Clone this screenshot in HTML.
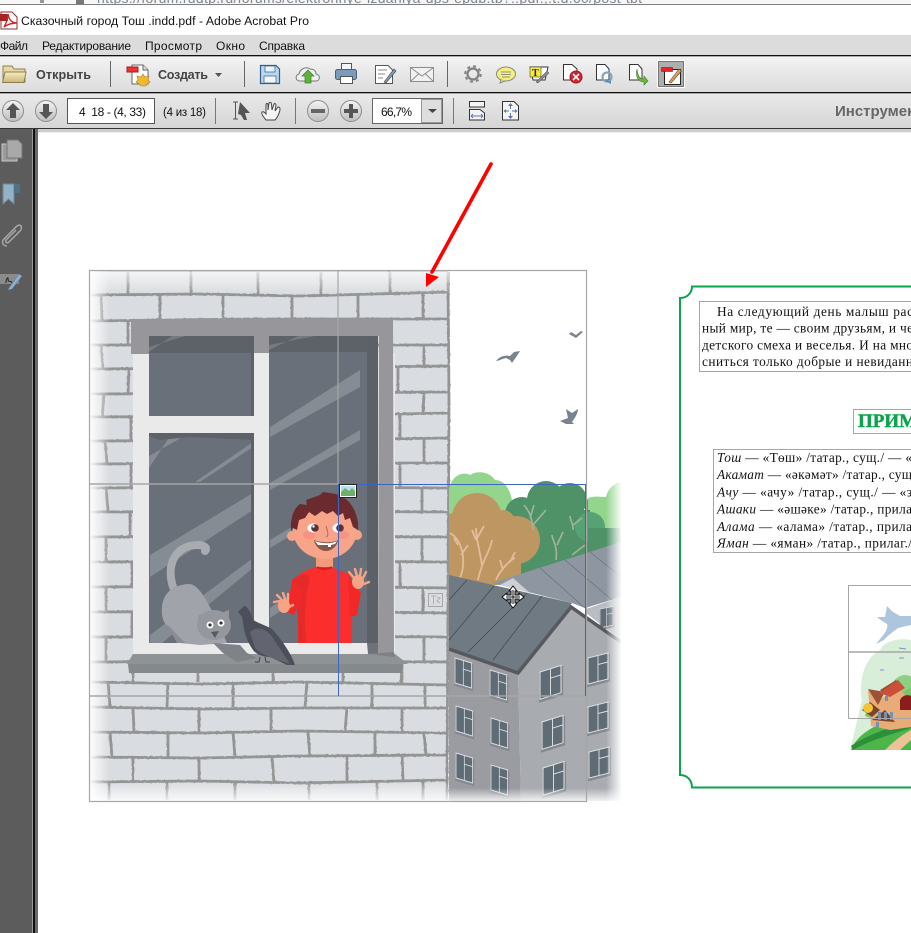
<!DOCTYPE html>
<html><head><meta charset="utf-8"><title>Сказочный город Тош</title>
<style>html,body{margin:0;padding:0;background:#fff;overflow:hidden}svg{display:block}text{font-family:"Liberation Sans",sans-serif}.s{font-family:"Liberation Serif",serif;font-size:13.33px;fill:#111}</style></head><body>
<svg xmlns="http://www.w3.org/2000/svg" width="911" height="933" viewBox="0 0 911 933">
<defs>
<linearGradient id="t1" x1="0" y1="0" x2="0" y2="1"><stop offset="0" stop-color="#f3f3f3"/><stop offset="1" stop-color="#dcdcdc"/></linearGradient>
<linearGradient id="t2" x1="0" y1="0" x2="0" y2="1"><stop offset="0" stop-color="#e9e9e9"/><stop offset="1" stop-color="#d6d6d6"/></linearGradient>
<linearGradient id="fl" x1="0" y1="0" x2="1" y2="0"><stop offset="0" stop-color="#fff" stop-opacity=".95"/><stop offset="1" stop-color="#fff" stop-opacity="0"/></linearGradient>
<linearGradient id="fr" x1="0" y1="0" x2="1" y2="0"><stop offset="0" stop-color="#fff" stop-opacity="0"/><stop offset="1" stop-color="#fff"/></linearGradient>
<linearGradient id="ft" x1="0" y1="0" x2="0" y2="1"><stop offset="0" stop-color="#fff" stop-opacity=".7"/><stop offset="1" stop-color="#fff" stop-opacity="0"/></linearGradient>
<linearGradient id="fb" x1="0" y1="0" x2="0" y2="1"><stop offset="0" stop-color="#fff" stop-opacity="0"/><stop offset="1" stop-color="#fff" stop-opacity=".9"/></linearGradient>
<linearGradient id="btn" x1="0" y1="0" x2="0" y2="1"><stop offset="0" stop-color="#f4f4f4"/><stop offset="1" stop-color="#bdbdbd"/></linearGradient>
<linearGradient id="fold" x1="0" y1="0" x2="0" y2="1"><stop offset="0" stop-color="#f6eec6"/><stop offset="1" stop-color="#cdb676"/></linearGradient>
<filter id="rough" x="-2%" y="-2%" width="104%" height="104%" color-interpolation-filters="sRGB"><feTurbulence type="fractalNoise" baseFrequency=".3" numOctaves="2" seed="4"/><feDisplacementMap in="SourceGraphic" scale="1.6"/></filter>
<clipPath id="sc"><rect x="449" y="465" width="172" height="340"/></clipPath>
<g id="w"><path d="M-1 1H22V29H-1Z" fill="#85888e"/><path d="M0 0H20V26H0Z" fill="#5f6b75" stroke="#dfe2e5" stroke-width="1"/><path d="M10 0V26M10 9H20" stroke="#dfe2e5" stroke-width=".9" fill="none"/></g>
</defs>

<!-- Chrome -->
<rect width="911" height="933" fill="#fff"/>
<rect width="911" height="5" fill="#f6f6f6"/>
<text x="97" y="3" font-size="14" fill="#7d8791" textLength="545">https://forum.rudtp.ru/forums/elektronnye-izdaniya-dps-epub.tb?..pdf.;.t.d.60/post-tbt</text>
<rect x="76" y="0" width="8" height="4" fill="#777"/><rect x="40" y="0" width="4" height="3" fill="#999"/>
<rect y="4" width="911" height="1" fill="#808080"/>
<rect y="5" width="911" height="30" fill="#fff"/>
<!-- pdf icon -->
<path d="M1 12H12L17 17V29H1Z" fill="#fff" stroke="#8b2f2f" stroke-width="1"/><path d="M0 14H8V21H0Z" fill="#a52424"/><path d="M4 27C7 22 8 17 8 14C9 19 11 23 17 23C12 23 8 24 4 27Z" fill="none" stroke="#d3252c" stroke-width="1.4"/>
<text x="21" y="25" font-size="12.2" fill="#111" textLength="288">Сказочный город Тош .indd.pdf - Adobe Acrobat Pro</text>
<rect y="35" width="911" height="20" fill="#dcdcdc"/>
<g font-size="12" fill="#111">
<text x="0" y="50" textLength="28">Файл</text><text x="42" y="50" textLength="89">Редактирование</text><text x="145" y="50" textLength="57">Просмотр</text><text x="216" y="50" textLength="29">Окно</text><text x="259" y="50" textLength="46">Справка</text>
</g>
<rect y="55" width="911" height="1.4" fill="#111"/>
<rect y="56.4" width="911" height="35.6" fill="url(#t1)"/>
<rect y="92" width="911" height="1.4" fill="#111"/>
<rect y="93.4" width="911" height="34.6" fill="url(#t2)"/>
<rect y="128" width="911" height="1.2" fill="#333"/>
<!-- toolbar 1 -->
<path d="M3 66H12L14 69H25V82H3Z" fill="#e6d9a3" stroke="#8f7f4f"/><path d="M2.500 82.500L5 72H26L24 82.500Z" fill="url(#fold)" stroke="#8f7f4f"/>
<text x="36" y="79" font-size="12.6" font-weight="bold" fill="#444" textLength="55">Открыть</text>
<g fill="#666"><rect x="110" y="61" width="1" height="26"/><rect x="244" y="61" width="1" height="26"/><rect x="447" y="61" width="1" height="26"/></g>
<path d="M132 65H143L148 70V84H132Z" fill="#fff" stroke="#666"/><path d="M143 65V70H148" fill="#ddd" stroke="#666"/><rect x="127" y="67" width="11" height="5" fill="#e33" stroke="#922"/><path d="M143 74L145 77L149 76L148 80L150 82L147 84L146 86H141L139 84L136 82L138 80L137 76L141 77Z" fill="#efb92f" stroke="#a97f20" stroke-width=".6"/>
<text x="158" y="79" font-size="12.6" font-weight="bold" fill="#444" textLength="50">Создать</text>
<path d="M215 73H222L218.500 77Z" fill="#555"/>
<!-- save -->
<path d="M260.500 65.500H276L279.500 69V83.500H260.500Z" fill="#b9d6ee" stroke="#2e5f8d" stroke-width="1.2"/><rect x="265" y="66" width="10" height="6" fill="#eaf3fa" stroke="#2e5f8d" stroke-width=".7"/><rect x="264" y="76" width="12" height="7" fill="#f4f4f4" stroke="#2e5f8d" stroke-width=".7"/>
<!-- cloud -->
<path d="M300 81C295 81 295 75 299 74C300 69 306 66 310 69C315 69 316 72 316 74C321 75 320 81 316 81Z" fill="#f0f0f0" stroke="#777"/><path d="M308 70L314 76H311V83H305V76H302Z" fill="#5fb13c" stroke="#3e7f27" stroke-width=".7"/>
<!-- print -->
<rect x="341.500" y="63.500" width="10" height="7" fill="#f5f5f5" stroke="#555"/><rect x="335.500" y="69.500" width="21" height="10" rx="2" fill="#7a9bbb" stroke="#4a6278"/><rect x="340.500" y="76.500" width="12" height="7" fill="#fff" stroke="#555"/>
<!-- edit -->
<path d="M375.500 65.500H388L392.500 70V83.500H375.500Z" fill="#fff" stroke="#555"/><path d="M378 70H387M378 74H385M378 78H383" stroke="#888"/><path d="M384 82L394 69L396 71L386 83Z" fill="#7d9dbd" stroke="#444" stroke-width=".6"/>
<!-- mail -->
<rect x="410.500" y="67.500" width="23" height="14" fill="#f1f1f1" stroke="#8d8d8d"/><path d="M410.500 67.500L422 76L433.500 67.500M410.500 81.500L419 73.500M433.500 81.500L425 73.500" fill="none" stroke="#8d8d8d"/>
<!-- gear -->
<circle cx="473" cy="74" r="5.500" fill="none" stroke="#808080" stroke-width="2.200"/><circle cx="473" cy="74" r="7.800" fill="none" stroke="#858585" stroke-width="2" stroke-dasharray="3 3.100"/>
<!-- comment -->
<ellipse cx="506" cy="74" rx="9.500" ry="7" fill="#f4ee7c" stroke="#888"/><path d="M501 80L500 83L505 81" fill="#f4ee7c" stroke="#888"/><path d="M501 72H511M501 74.500H511M502 77H510" stroke="#777" stroke-width=".8"/>
<!-- T note -->
<path d="M530 67H548L545 80H533Z" fill="#fff" stroke="#333"/><rect x="530" y="67" width="11" height="10" fill="#f4ec32" stroke="#444" stroke-width=".6"/><text x="532" y="76" font-size="10" font-weight="bold" fill="#222" style="font-family:'Liberation Serif',serif">T</text><path d="M536 82L547 71L549 73L538 83Z" fill="#889" stroke="#444" stroke-width=".5"/>
<!-- doc x -->
<path d="M563.500 64.500H572L577 69V80H563.500Z" fill="#fff" stroke="#333"/><circle cx="576" cy="77" r="6" fill="#d5232f" stroke="#9a1a22"/><path d="M573 74L579 80M579 74L573 80" stroke="#fff" stroke-width="1.600"/>
<!-- doc refresh -->
<path d="M596.500 64.500H605L609 69V80H596.500Z" fill="#fff" stroke="#333"/><circle cx="607" cy="77" r="4.500" fill="none" stroke="#7fa6c4" stroke-width="2.200"/><path d="M605 81H611V84Z" fill="#5f8fb5"/>
<!-- doc arrow -->
<path d="M629.500 64.500H638L642 69V80H629.500Z" fill="#fff" stroke="#333"/><path d="M637 69C638 78 641 79 644 79V76L648 81L644 85V82C639 82 635 78 637 69Z" fill="#6fb544" stroke="#3f7d29" stroke-width=".6"/>
<!-- active -->
<rect x="657.500" y="60.500" width="27" height="27" fill="#aeaeae" stroke="#fff"/><rect x="658.500" y="61.500" width="25" height="25" fill="none" stroke="#777"/>
<path d="M664.500 69.500H680.500V84.500H664.500Z" fill="#fff" stroke="#222"/><rect x="661.500" y="67.500" width="11" height="4" fill="#e3242b" stroke="#8f1b1f" stroke-width=".6"/><path d="M669 82L679 69L681.500 71L671 83Z" fill="#e8a34a" stroke="#444" stroke-width=".6"/>
<!-- toolbar 2 -->
<g stroke="#8c8c8c" fill="url(#btn)"><circle cx="13" cy="111" r="10.500"/><circle cx="46" cy="111" r="10.500"/><circle cx="318" cy="111" r="10.500"/><circle cx="351" cy="111" r="10.500"/></g>
<path d="M13 103L20 110H16V118H10V110H6Z" fill="#555"/><path d="M46 119L53 112H49V104H43V112H39Z" fill="#555"/>
<rect x="311" y="109" width="14" height="4" fill="#666"/><path d="M349 104H353V109H358V113H353V118H349V113H344V109H349Z" fill="#555"/>
<rect x="67.500" y="98.500" width="87" height="25" fill="#fff" stroke="#555"/>
<text x="79" y="116" font-size="12" fill="#111" textLength="67" xml:space="preserve">4  18 - (4, 33)</text>
<text x="163" y="116" font-size="11.500" fill="#111" textLength="43">(4 из 18)</text>
<g fill="#777"><rect x="215" y="98" width="1" height="26"/><rect x="295" y="98" width="1" height="26"/><rect x="453" y="98" width="1" height="26"/></g>
<path d="M233 102H238M233 119H238M235.500 102V119" stroke="#555" fill="none"/><path d="M240 102L250 113H245L247 120L244 120L241 115L238 114Z" fill="#555"/>
<path d="M266 120C263 116 261 114 262 112C264 111 265 113 266 114L266 105C266 103 268 103 268 105V110L269 103C270 102 271 102 271.500 104L272 110L274 104C275 103 276 104 276 105L275 111L278 107C280 107 280 108 280 110C279 114 278 117 275 120Z" fill="#f5f5f5" stroke="#444"/>
<rect x="372.500" y="98.500" width="70" height="25" fill="#fff" stroke="#666"/><rect x="421.500" y="99.500" width="20" height="23" fill="#dedede" stroke="#999"/>
<path d="M428 109H437L432.500 113Z" fill="#444"/>
<text x="381" y="116" font-size="12" fill="#111" textLength="31">66,7%</text>
<path d="M469.500 101.500H484.500V107H469.500ZM469.500 109.500H480L484.500 113V120H469.500Z" fill="#f5f5f5" stroke="#333"/><path d="M471 116H483M471 116L473 114M471 116L473 118M483 116L481 114M483 116L481 118" stroke="#6075b0" fill="none"/>
<path d="M502.500 101.500H514L518.500 106V120H502.500Z" fill="#f5f5f5" stroke="#333"/><path d="M510.500 104V109M510.500 113V118M505 111H509M512 111H516" stroke="#6075b0" fill="none"/><path d="M508 106L510.500 103L513 106ZM508 116L510.500 119L513 116ZM506 109L503.500 111L506 113ZM515 109L517.500 111L515 113Z" fill="#6075b0"/>
<text x="835" y="116" font-size="15" font-weight="bold" fill="#666">Инструмен</text>

<!-- left panel -->
<rect y="129" width="32" height="804" fill="#5c5c5c"/><rect x="32" y="129" width="1" height="804" fill="#9a9a9a"/><rect x="33" y="129" width="2" height="804" fill="#111"/><rect x="35" y="129" width="3" height="804" fill="#6a6a6a"/>
<rect x="38" y="129" width="873" height="3" fill="#cfcfcf"/><rect x="38" y="132" width="873" height="1" fill="#eee"/>
<rect x="2" y="144" width="15" height="17" fill="#9b9b9b" stroke="#c8c8c8"/><path d="M7 140H18L22 144V158H7Z" fill="#a9a9a9" stroke="#777"/>
<path d="M3 184H14V204L8.500 199L3 204Z" fill="#93b2c8" stroke="#6e8799"/><rect x="14" y="184" width="6" height="9" fill="#4f7289"/>
<path d="M7 246C3 246 1 242 4 239L17 226C21 223 23 228 20 231L9 242C7 244 5 242 6 240L16 230" fill="none" stroke="#a8a8a8" stroke-width="1.500"/>
<rect x="0" y="274" width="19" height="10" fill="#8b8b8b"/><path d="M6 283C6 278 9 276 8 280C9 283 11 280 12 283" fill="none" stroke="#222"/><path d="M9 288L19 274L22 276L12 289L8 290Z" fill="#8fb0cd" stroke="#5f7e98" stroke-width=".6"/>

<!-- wall -->
<rect x="90" y="271" width="358.500" height="530" fill="#d9dce0"/>
<g filter="url(#rough)" fill="none" stroke="#949495" stroke-width="2.800">
<path d="M90 295L200 294L300 296L448 292M90 321L250 319L448 319M90 345H448M90 369L250 368L448 366M90 394L300 393L448 392M90 417L300 416L448 413M90 441L300 440L448 438M90 464L300 463L448 463M90 488L300 487L448 488M90 512L300 511L448 512M90 537L300 536L448 537M90 562L300 561L448 562M90 587L300 586L448 588M90 612L300 611L448 613M90 637L300 636L448 637M90 662L300 661L448 662M90 682L200 684L300 682L448 685M90 707L200 709L300 708L448 708M90 732L200 733L300 731L448 733M90 757L200 758L300 756L448 755M90 782L200 781L300 783L448 780"/>
<path d="M128 272V295M191 272V295M258 272V295M321 272V295M390 272V293M101 295L102 321M160 295V321M223 295V321M292 295V321M358 295V320M423 293V319M128 321V345M101 345L103 369M129 369L128 394M104 394L102 417M131 417V441M105 441L107 464M131 464V488M106 488L108 512M130 512V537M106 537V562M132 562V587M106 587V612M132 612V637M106 637V662M133 664V682M198 664V682M273 664V682M343 664V682M402 664V683M108 682L110 707M168 682L167 707M233 682V707M307 682L305 707M372 682V707M425 685V708M133 707L134 732M199 707V732M271 707V732M347 707L345 732M402 708V733M110 732L112 757M168 732V757M233 732L235 757M308 732L310 757M375 732V757M424 733L426 755M133 757V782M199 757V782M272 757L274 782M347 757V782M402 755L403 780M109 782V800M167 782V800M235 782V800M309 782V800M377 782V800M423 780V800M424 345V366M398 366V392M424 392L423 413M400 413V438M424 438V463M400 463V488M422 488V512M422 537V562M400 562V588M423 588V613M424 637V662M402 662L401 685"/>
<path d="M448 272L449 400L447 800" stroke-width="2.800"/>
</g>

<!-- window -->
<rect x="133" y="353" width="262" height="302" fill="#eaeaea"/>
<path d="M131 319H393L394 654H378L379 336H149V354H131Z" fill="#97979b"/>
<rect x="149" y="336" width="105" height="80" fill="#6a7079"/><rect x="149" y="433" width="105" height="210" fill="#6a7079"/><rect x="269" y="336" width="98" height="307" fill="#6a7079"/>
<g fill="#868c93">
<path d="M149 468V456L190 433H172ZM195 482L253 442V447L200 482Z"/>
<path d="M150 555L253 493V510L150 577ZM150 635L253 558V568L162 643H150ZM270 427L360 370V387L270 437ZM270 483L360 430V440L270 490ZM270 540L300 522V530L270 548ZM270 608L300 588V598L270 618Z"/>
</g>
<path d="M149 336H254V353H149ZM269 336H367V352H269ZM251 353H254V416H251ZM251 433H254V643H251ZM149 433L254 433V440L190 437L160 440L149 436Z" fill="#5d6168"/>
<rect x="367" y="336" width="11" height="307" fill="#5c6168"/>
<rect x="254" y="336" width="15" height="17" fill="#97979b"/>
<path d="M149 352L172 336H185L149 347Z" fill="#767a80"/><path d="M269 350L298 336H315L269 345Z" fill="#767a80"/>
<path d="M367 643H378V654L368 654Z" fill="#6f7379"/>
<path d="M133 654H395L408 664H127Z" fill="#8e9396"/>
<path d="M128 664H403L402 673H129Z" fill="#85898c"/>
<path d="M368 654L395 657L394 652Z" fill="#7f8085"/>

<!-- boy -->
<rect x="316" y="553" width="17" height="17" fill="#f29a7c"/>
<circle cx="292" cy="536" r="5" fill="#f5a487"/><circle cx="357" cy="535" r="5" fill="#f5a487"/>
<ellipse cx="325" cy="530" rx="32" ry="29" fill="#f7a488"/>
<path d="M291 531C290 518 294 508 300 504L307 505L306 500L320 495L323 492L336 494L346 499C354 506 359 518 358 530L353 527L350 518L345 520L343 513L338 516L333 511L327 514L322 511L315 516L309 512L305 518L299 520L297 530L293 528Z" fill="#6b2a2d"/>
<ellipse cx="309" cy="535" rx="6" ry="4" fill="#f48f84" opacity=".8"/><ellipse cx="343" cy="535" rx="6" ry="4" fill="#f48f84" opacity=".8"/>
<ellipse cx="313" cy="528" rx="5.500" ry="4.500" fill="#fff"/><ellipse cx="338" cy="528" rx="5.500" ry="4.500" fill="#fff"/><circle cx="315" cy="528" r="3.800" fill="#5a3236"/><circle cx="340" cy="528" r="3.800" fill="#5a3236"/><circle cx="313.500" cy="526.500" r="1.200" fill="#fff"/>
<path d="M326 526C328 532 329 536 326 537" fill="none" stroke="#b66" />
<path d="M314 540C322 543 332 543 338 540C337 547 331 551 326 551C320 551 315 546 314 540Z" fill="#84584c"/><path d="M315 541C322 544 332 544 337 541L335 544L331 545V547L328 547V545L318 545Z" fill="#fff"/>
<path d="M292 580C302 572 310 568 317 567L332 567C338 570 345 572 350 575C353 600 352 625 352 643H298C299 625 297 600 292 580Z" fill="#fb2d2d"/>
<path d="M292 580C300 575 306 572 310 578C305 595 304 620 306 643H298C299 625 297 600 292 580Z" fill="#e52a2a"/>
<path d="M292 580L287 612L294 615L303 594ZM348 575L361 593L357 615L350 617L349 595Z" fill="#f22828"/>
<path d="M317 567Q325 571 332 567" stroke="#cf2222" stroke-width="2" fill="none"/>
<ellipse cx="284" cy="606" rx="6" ry="7" fill="#f6a386"/><ellipse cx="358" cy="582" rx="6" ry="7" fill="#f6a386"/>
<g stroke="#f6a386" stroke-width="2.400" stroke-linecap="round" fill="none"><path d="M280 601L274 602M281 599L277 595M285 599L283 593M288 601L288 594M289 607L293 605M354 578L349 572M357 576L355 569M360 576L361 569M363 578L366 572M364 584L369 582"/></g>

<!-- cat -->
<path d="M173 587C166 565 175 545 198 545C204 545 208 548 205 551" fill="none" stroke="#a8abb0" stroke-width="8" stroke-linecap="round"/>
<path d="M162 607C163 592 175 584 190 584C200 586 206 600 217 620L227 643L200 645L180 643C176 632 172 630 170 627C164 625 161 618 162 607Z" fill="#a0a3a9"/>
<path d="M168 625C175 632 181 640 186 643H177L170 630Z" fill="#8b8d94"/>
<path d="M213 643L240 645L247 653L257 658L237 662L223 653Z" fill="#7f8388"/>
<ellipse cx="214" cy="625" rx="17" ry="15" fill="#94979e"/><path d="M198 615L198 623L207 613ZM229 610L221 613L229 622Z" fill="#94979e"/>
<circle cx="210" cy="625" r="3.500" fill="#fff"/><circle cx="221" cy="623" r="3.500" fill="#fff"/><circle cx="210" cy="625" r="1.600" fill="#333"/><circle cx="221" cy="623" r="1.600" fill="#333"/><path d="M211 632L219 631L215 638Z" fill="#5a5a60"/>
<!-- pigeon -->
<path d="M238 612L244 606C249 607 251 614 253 620C262 625 270 627 273 630C282 640 292 655 295 665L287 665L270 657C262 657 256 654 253 650C249 644 246 638 245 633C243 626 243 620 242 617Z" fill="#4c4f59"/>
<path d="M250 632C258 625 268 630 273 638C278 646 285 656 290 664C278 660 262 656 255 648Z" fill="#62656f"/>
<path d="M260 657L259 662L255 662M265 657L266 662L270 662" stroke="#444" fill="none"/>

<!-- trees and houses -->
<g clip-path="url(#sc)">
<path d="M449 490C452 473 465 472 470 475C478 470 490 472 495 480C505 480 510 490 512 500V580H449Z" fill="#93d58c"/>
<path d="M586 500C590 495 600 497 606 497C608 488 615 483 621 482V545H586Z" fill="#93d58c"/>
<g fill="#4f9268"><circle cx="546" cy="500" r="19"/><circle cx="522" cy="514" r="17"/><circle cx="570" cy="500" r="17"/><rect x="505" y="510" width="85" height="70"/><rect x="586" y="500" width="2" height="30"/></g>
<circle cx="590" cy="527" r="15" fill="#56a273"/><rect x="588" y="528" width="33" height="40" fill="#4f9268"/>
<g fill="#bd9662"><circle cx="477" cy="518" r="25"/><circle cx="503" cy="522" r="12"/><circle cx="516" cy="540" r="24"/><circle cx="455" cy="535" r="22"/><rect x="449" y="530" width="72" height="55"/></g>
<g stroke="#e3bc9b" stroke-width="1.800" fill="none"><path d="M460 578C467 560 462 540 450 533M461 555L468 545M458 545L454 538M478 580C482 560 490 552 492 540M482 566C480 550 476 540 476 528M476 540L472 530M476 540L484 526M496 580C500 570 510 560 515 558M503 570L500 560M510 562L515 552"/></g>
<g stroke="#a4b49a" stroke-width="1.600" fill="none"><path d="M533 530C532 515 528 510 524 505M530 518L534 505M533 525L546 510M573 530C574 525 570 520 570 516M573 525L582 518M556 560C558 545 552 540 552 535M557 545L563 532M572 555L585 545"/></g>
<path d="M514 576L621 542V597L585 608L572 603L492 583Z" fill="#8e96a2"/>
<path d="M540 568L585 608M565 560L612 600M590 552L621 577" stroke="#69707b" stroke-width=".7" fill="none"/>
<path d="M500 585L513 578L530 593Z" fill="#ccd0d4"/>
<path d="M586 609L621 597V640L586 613Z" fill="#b8bdc3"/>
<use href="#w" transform="matrix(.65,-.12,0,.72,600,609)"/>
<path d="M449 648V801H521L518 672Z" fill="#9a9ca1"/>
<path d="M518 672L570 607L621 642V801H521Z" fill="#a8abb0"/>
<path d="M449 575L572 603L518 672L449 648Z" fill="#6f7a83"/>
<path d="M449 649L518 673L571 607L621 642" fill="none" stroke="#58585f" stroke-width="3.500"/>
<path d="M467 580L449 600M494 586L449 640M542 596L493 660M527 593L468 652" stroke="#3f454b" stroke-width=".7" fill="none"/>
<use href="#w" transform="matrix(.83,.25,0,.96,455,658)"/><use href="#w" transform="matrix(.83,.25,0,.96,490,670)"/><use href="#w" transform="matrix(.83,.25,0,.96,456,706)"/><use href="#w" transform="matrix(.83,.25,0,.96,491,718)"/><use href="#w" transform="matrix(.83,.25,0,.96,456,753)"/><use href="#w" transform="matrix(.83,.25,0,.96,491,765)"/>
<use href="#w" transform="matrix(1.05,-.33,0,1.05,540,672)"/><use href="#w" transform="matrix(1.05,-.33,0,1.05,542,722)"/><use href="#w" transform="matrix(1.05,-.33,0,1.05,543,768)"/>
<use href="#w" transform="matrix(1,-.25,0,1,588,658)"/><use href="#w" transform="matrix(1,-.25,0,1,588,707)"/><use href="#w" transform="matrix(1,-.25,0,1,589,752)"/>
<rect x="449" y="788" width="172" height="14" fill="url(#fb)"/>
<rect x="606" y="470" width="16" height="333" fill="url(#fr)"/>
</g>
<!-- fades -->
<rect x="90" y="271" width="20" height="531" fill="url(#fl)"/>
<rect x="90" y="272" width="359" height="22" fill="url(#ft)"/>
<rect x="90" y="782" width="359" height="20" fill="url(#fb)"/>
<!-- birds -->
<g fill="#7a8490">
<path d="M569 334L571 332L576 335L581 331L583 332L576 338Z"/>
<path d="M496 361C500 356 505 355 510 356L514 352L520 351C517 356 514 360 512 363L510 360L506 358C502 359 498 361 496 361Z"/>
<path d="M560 421L568 418L566 409L572 413L578 409C578 414 574 419 572 422L574 424H566Z"/>
</g>
<!-- overlay frames -->
<g fill="none" stroke="#a6a6a6" stroke-width="1.200"><rect x="89.500" y="270.500" width="497" height="531"/><path d="M338 271V484"/><path d="M90 484H338M90 696H586" stroke-width="1.500"/></g>
<path d="M338.500 484V696M338.500 484.500H585.500V696" fill="none" stroke="#3d66c2" stroke-width="1"/>
<rect x="339.500" y="484.500" width="17" height="13" fill="#fff" stroke="#222"/><rect x="341" y="486" width="14" height="10" fill="#b8dff0"/><path d="M341 496V492L345 488L349 491L352 488L355 491V496Z" fill="#72b06a"/>
<g fill="none" stroke="#a7a7a7"><rect x="428.500" y="593.500" width="14" height="13"/><path d="M431 596H436M433.500 596V604M437 597L440 598L437 601L440 603" stroke-width=".8"/></g>
<!-- cursor -->
<path d="M513 586L517 591H515V595H519V593L524 597L519 601V599H515V603H517L513 608L509 603H511V599H507V601L502 597L507 593V595H511V591H509Z" fill="#fff" stroke="#111"/>
<path d="M513 590V604M506 597H520" stroke="#111"/>
<!-- arrow -->
<path d="M491 164L432 272" stroke="#fe0000" stroke-width="3.600" stroke-linecap="round"/><path d="M426 287L426 273L439 277Z" fill="#fe0000"/>

<!-- right page -->
<path d="M911 286.500H692C692 293 687 298 680 298V775C687 775 692 780 692 787.500H911" fill="none" stroke="#0ba34b" stroke-width="2"/>
<rect x="699.500" y="301.500" width="220" height="70" fill="#fff" stroke="#a6a6a6"/>
<text class="s" x="717" y="316" textLength="196">На следующий день малыш рас</text>
<text class="s" x="702" y="332.500" textLength="211">ный мир, те — своим друзьям, и че</text>
<text class="s" x="702" y="349.500" textLength="211">детского смеха и веселья. И на мно</text>
<text class="s" x="702" y="366" textLength="211">сниться только добрые и невиданн</text>
<rect x="853.500" y="409.500" width="70" height="24" fill="#fff" stroke="#a6a6a6"/>
<text x="858" y="427" font-size="19" font-weight="bold" fill="#0ba34b" stroke="#0ba34b" stroke-width=".4" style="font-family:'Liberation Serif',serif">ПРИМЕ</text>
<rect x="713.500" y="449.500" width="220" height="103" fill="#fff" stroke="#a6a6a6"/>
<text class="s" x="717" y="462" textLength="195"><tspan font-style="italic">Тош</tspan> — «Төш» /татар., сущ./ — «</text>
<text class="s" x="717" y="479" textLength="195"><tspan font-style="italic">Акамат</tspan> — «әкәмәт» /татар., сущ</text>
<text class="s" x="717" y="496.500" textLength="195"><tspan font-style="italic">Ачу</tspan> — «ачу» /татар., сущ./ — «з</text>
<text class="s" x="717" y="513.500" textLength="195"><tspan font-style="italic">Ашаки</tspan> — «әшәке» /татар., прила</text>
<text class="s" x="717" y="531" textLength="195"><tspan font-style="italic">Алама</tspan> — «алама» /татар., прила</text>
<text class="s" x="717" y="547.500" textLength="195"><tspan font-style="italic">Яман</tspan> — «яман» /татар., прилаг./</text>
<!-- town illustration -->
<path d="M862 700C858 680 865 658 880 650C885 640 900 638 911 640V750H850Z" fill="#d8eed9"/>
<path d="M877 617L885 617L887 606L893 612L900 616L911 616V625L898 628C893 632 887 636 884 640L876 644L884 634C887 630 888 626 887 624C884 622 880 620 877 617Z" fill="#aec5de"/>
<path d="M899 648L906 649M899 658H904M880 670H884" stroke="#6d9cc9" fill="none"/>
<circle cx="905" cy="688" r="13" fill="#8fcf85"/>
<path d="M851 750C858 732 880 722 911 712V750Z" fill="#4db64a"/><path d="M853 750C870 740 890 735 911 728V722C885 728 862 738 851 746Z" fill="#2d8f3a"/><path d="M885 750C895 740 905 733 911 730V740L900 750Z" fill="#edc296"/>
<path d="M865 716C868 705 880 700 895 695L911 688V720L880 722Z" fill="#7dc36c"/>
<path d="M868 690L880 700L890 692L900 690L911 700V727L890 730L871 726Z" fill="#e9ab78"/>
<path d="M868 689L885 692L878 705ZM880 690L896 680L902 686L885 695Z" fill="#9a5435"/><path d="M880 693L898 680L905 688L890 697Z" fill="#cc4f3a"/>
<path d="M862 710L870 702L880 710L872 717ZM872 720L885 710L895 722Z" fill="#7a4526"/><circle cx="868" cy="708" r="5" fill="#f3c33a"/><path d="M900 700A8 8 0 0 1 911 696V710H900Z" fill="#8c1d1d"/>
<g fill="#7392b0"><rect x="878" y="712" width="3" height="8"/><rect x="884" y="712" width="3" height="8"/><rect x="890" y="712" width="3" height="8"/><rect x="876" y="722" width="3" height="6"/><rect x="885" y="696" width="3" height="5"/></g>
<path d="M848.500 718.500V585.500H920M848.500 718.500H920" fill="none" stroke="#a6a6a6" stroke-width="1"/>
<path d="M848 652H911" stroke="#a6a6a6" stroke-width="1.500"/>
</svg>
</body></html>
